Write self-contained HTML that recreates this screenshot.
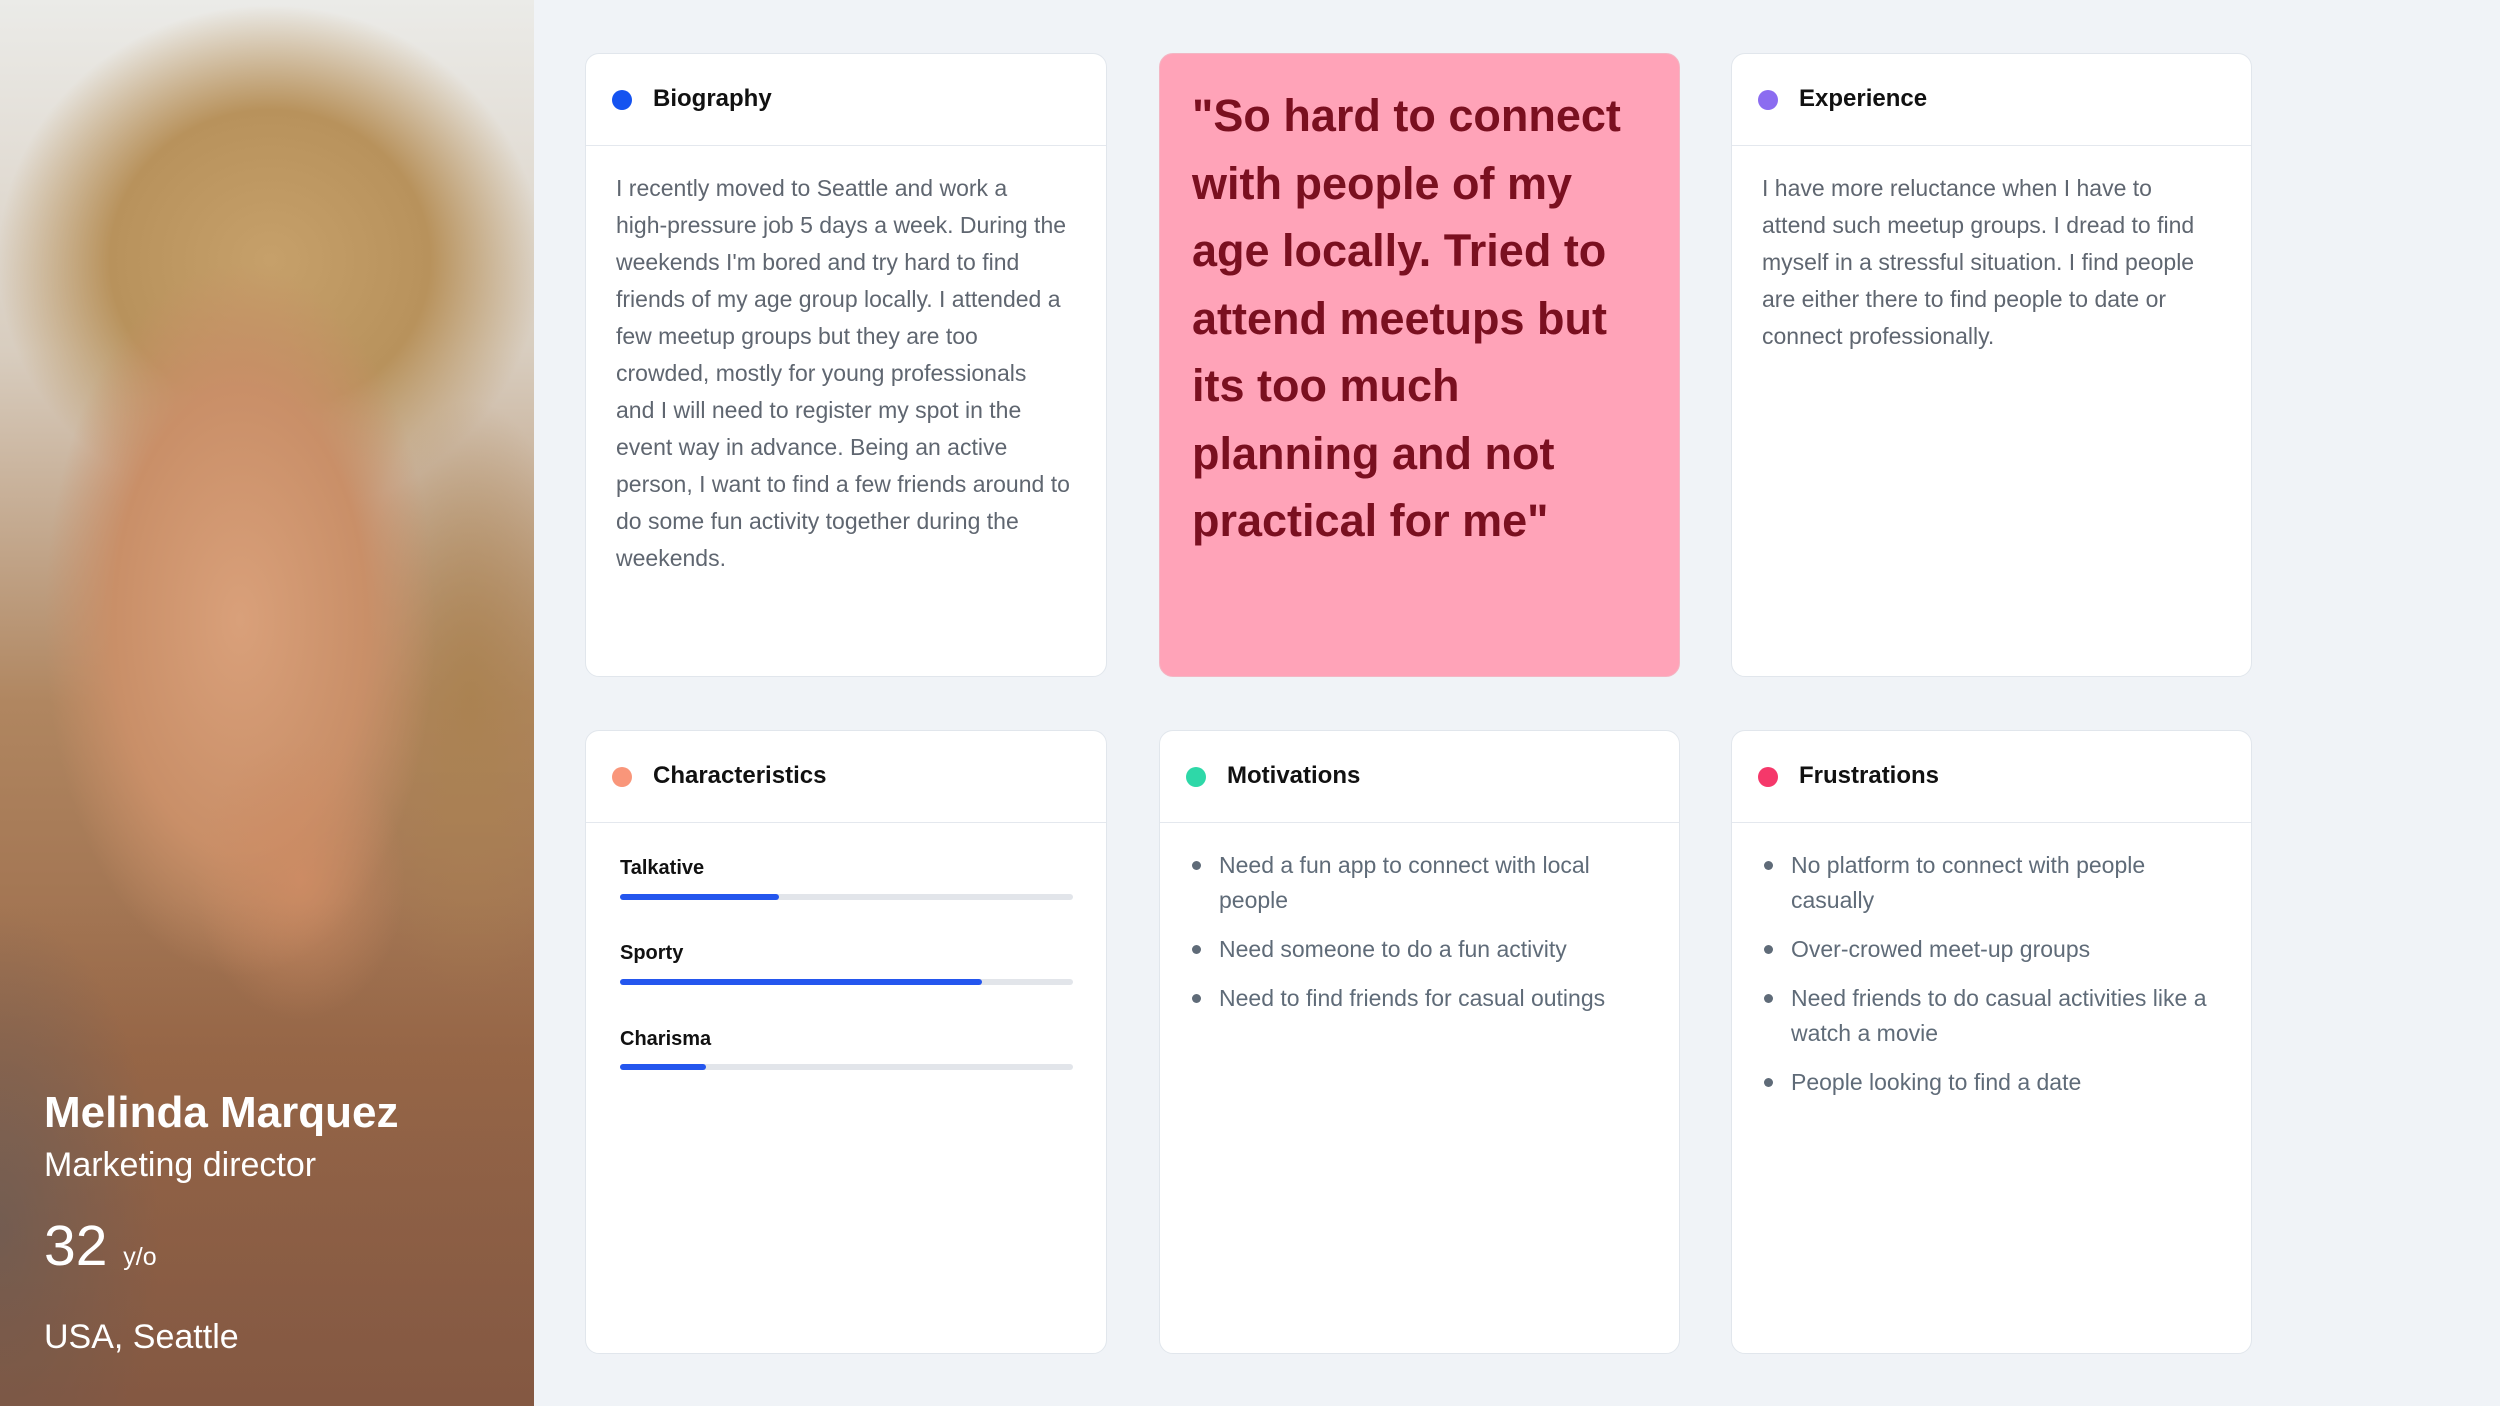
<!DOCTYPE html>
<html><head><meta charset="utf-8"><style>
*{margin:0;padding:0;box-sizing:border-box}
body{width:2500px;height:1406px;background:#f0f3f7;font-family:"Liberation Sans",Arial,sans-serif;position:relative;overflow:hidden}
.photo{position:absolute;left:0;top:0;width:534px;height:1406px;overflow:hidden;
background:
radial-gradient(ellipse 150px 200px at 300px 880px,rgba(206,140,100,.9),rgba(206,140,100,0) 70%),
radial-gradient(ellipse 230px 420px at 240px 620px,#d9a07a 0%,#c98f68 55%,rgba(180,120,80,0) 85%),
radial-gradient(ellipse 120px 300px at 470px 700px,rgba(170,130,80,.9),rgba(170,130,80,0)),
radial-gradient(ellipse 320px 300px at 270px 260px,#c6a06a 0%,#b8925c 50%,rgba(190,160,120,0) 85%),
linear-gradient(180deg,#ebebe8 0%,#d8cdbf 25%,#b08660 50%,#9a6a4a 75%,#8c6450 100%);}
.photo .sh{position:absolute;left:0;top:900px;width:200px;height:506px;background:radial-gradient(ellipse 160px 320px at 0 330px,rgba(110,100,95,.9),rgba(110,100,95,0));}
.photo .dk{position:absolute;left:0;top:900px;width:534px;height:506px;background:linear-gradient(180deg,rgba(120,70,40,0),rgba(120,70,45,.4))}
.info{position:absolute;left:44px;color:#fff;white-space:nowrap}
.card{position:absolute;background:#fff;border:1.5px solid #e1e6ec;border-radius:14px;overflow:hidden}
.hd{height:92px;border-bottom:1.5px solid #e4e8ee;position:relative}
.dot{position:absolute;left:26px;top:36px;width:20px;height:20px;border-radius:50%}
.ttl{position:absolute;left:67px;top:31px;font-size:24px;font-weight:bold;color:#111}
.txt{position:absolute;left:30px;color:#5f6670;font-size:23px;line-height:37px}
ul{list-style:none;position:absolute;left:32px;right:24px;color:#5f6b78;font-size:23px;line-height:35px}
li{position:relative;padding-left:27px;margin-bottom:14px}
li:before{content:"";position:absolute;left:0;top:13px;width:9px;height:9px;border-radius:50%;background:#5f6b78}
.lab{position:absolute;left:34px;font-size:20px;font-weight:bold;color:#111}
.bar{position:absolute;left:34px;width:453px;height:6px;border-radius:3px;background:#e2e5ea}
.bar i{display:block;height:6px;border-radius:3px;background:#2456ee}
</style></head><body>
<div class="photo"><div class="sh"></div><div class="dk"></div>
<div class="info" style="top:1088px;font-size:44px;font-weight:bold">Melinda Marquez</div>
<div class="info" style="top:1146px;font-size:34px">Marketing director</div>
<div class="info" style="top:1213px;font-size:57px">32 <span style="font-size:25px">y/o</span></div>
<div class="info" style="top:1318px;font-size:34px">USA, Seattle</div>
</div>

<div class="card" style="left:585px;top:53px;width:522px;height:624px">
<div class="hd"><div class="dot" style="background:#1553f0"></div><div class="ttl">Biography</div></div>
<div class="txt" style="top:116px;width:458px">I recently moved to Seattle and work a high&#8209;pressure job 5 days a week. During the weekends I'm bored and try hard to find friends of my age group locally. I attended a few meetup groups but they are too crowded, mostly for young professionals<br>and I will need to register my spot in the event way in advance. Being an active person, I want to find a few friends around to do some fun activity together during the weekends.</div>
</div>

<div class="card" style="left:1159px;top:53px;width:521px;height:624px;background:#ffa3b8;border-color:#f3b6c4">
<div style="position:absolute;left:32px;top:28px;width:440px;font-size:45px;font-weight:bold;line-height:67.5px;color:#7a1020">"So hard to connect with people of my age locally. Tried to attend meetups but its too much planning and not practical for me"</div>
</div>

<div class="card" style="left:1731px;top:53px;width:521px;height:624px">
<div class="hd"><div class="dot" style="background:#8b6cf0"></div><div class="ttl">Experience</div></div>
<div class="txt" style="top:116px;width:445px">I have more reluctance when I have to attend such meetup groups. I dread to find myself in a stressful situation. I find people are either there to find people to date or connect professionally.</div>
</div>

<div class="card" style="left:585px;top:730px;width:522px;height:624px">
<div class="hd"><div class="dot" style="background:#f9967a"></div><div class="ttl">Characteristics</div></div>
<div class="lab" style="top:126px">Talkative</div>
<div class="bar" style="top:163px"><i style="width:35%"></i></div>
<div class="lab" style="top:211px">Sporty</div>
<div class="bar" style="top:248px"><i style="width:80%"></i></div>
<div class="lab" style="top:297px">Charisma</div>
<div class="bar" style="top:333px"><i style="width:19%"></i></div>
</div>

<div class="card" style="left:1159px;top:730px;width:521px;height:624px">
<div class="hd"><div class="dot" style="background:#2ed8a8"></div><div class="ttl">Motivations</div></div>
<ul style="top:117px"><li>Need a fun app to connect with local people</li><li>Need someone to do a fun activity</li><li>Need to find friends for casual outings</li></ul>
</div>

<div class="card" style="left:1731px;top:730px;width:521px;height:624px">
<div class="hd"><div class="dot" style="background:#f5386a"></div><div class="ttl">Frustrations</div></div>
<ul style="top:117px"><li>No platform to connect with people casually</li><li>Over-crowed meet-up groups</li><li>Need friends to do casual activities like a watch a movie</li><li>People looking to find a date</li></ul>
</div>
</body></html>
